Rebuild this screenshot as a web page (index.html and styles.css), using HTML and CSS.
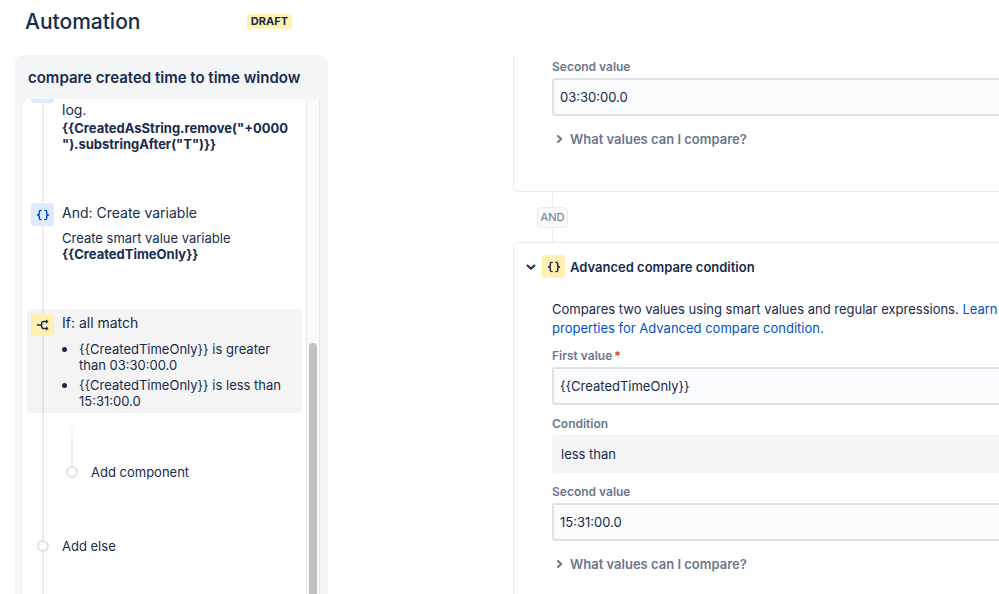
FILE: index.html
```html
<!DOCTYPE html>
<html lang="en">
<head>
  <meta charset="UTF-8">
  <title>Automation</title>
  <meta name="viewport" content="width=device-width, initial-scale=1.0">
  <link rel="stylesheet" href="styles.css">
</head>
<body>
  <header class="page-header">
    <h1>Automation</h1>
    <span class="badge">DRAFT</span>
  </header>

  <main class="page">
    <aside class="rule">
      <h2>compare created time to time window</h2>
      <div class="rule-body">
        <div class="tree">
          <div class="step step-log">
            <span class="icon icon-blue"></span>
            <div class="step-text">
              <h3>log.</h3>
              <p><b>{{CreatedAsString.remove("+0000").substringAfter("T")}}</b></p>
            </div>
          </div>

          <div class="step">
            <span class="icon icon-blue">
              <svg width="14" height="12" viewBox="0 0 15 13">
                <path d="M5.5 1.5H5Q3.5 1.5 3.5 3V4.8Q3.5 6.5 1.5 6.5Q3.5 6.5 3.5 8.2V10Q3.5 11.5 5 11.5H5.5M9.5 1.5H10Q11.5 1.5 11.5 3V4.8Q11.5 6.5 13.5 6.5Q11.5 6.5 11.5 8.2V10Q11.5 11.5 10 11.5H9.5"/>
              </svg>
            </span>
            <div class="step-text">
              <h3>And: Create variable</h3>
              <p class="details">Create smart value variable <b>{{CreatedTimeOnly}}</b></p>
            </div>
          </div>

          <div class="step selected">
            <span class="icon icon-yellow">
              <svg width="14" height="12" viewBox="0 0 15 13">
                <path d="M1.5 6.5H6M12 2.8H8.5Q6 2.8 6 5V8Q6 10.2 8.5 10.2H12"/>
                <path class="solid" d="M10.8 0.5L13.5 2.8L10.8 5.1ZM10.8 7.9L13.5 10.2L10.8 12.5Z"/>
              </svg>
            </span>
            <div class="step-text">
              <h3>If: all match</h3>
              <ul class="details">
                <li>{{CreatedTimeOnly}} is greater than 03:30:00.0</li>
                <li>{{CreatedTimeOnly}} is less than 15:31:00.0</li>
              </ul>
            </div>
          </div>

          <div class="branch">
            <span class="branch-line"></span>
            <button class="add" type="button"><span class="dot"></span>Add component</button>
          </div>
          <button class="add add-else" type="button"><span class="dot"></span>Add else</button>
        </div>
        <div class="scrollbar"><div class="thumb"></div></div>
      </div>
    </aside>

    <section class="editor">
      <div class="card card-first">
        <div class="fields">
          <label for="second1">Second value</label>
          <input type="text" id="second1" value="03:30:00.0">
          <button class="help" type="button">
            <svg width="8" height="10" viewBox="0 0 8 10"><path d="M2 2L5.2 5L2 8"/></svg>
            What values can I compare?
          </button>
        </div>
      </div>

      <div class="joiner"><span>AND</span></div>

      <div class="card">
        <div class="card-header">
          <svg width="12" height="10" viewBox="0 0 12 10"><path d="M2.5 3.5L6 6.7L9.5 3.5"/></svg>
          <span class="icon icon-yellow">
            <svg width="14" height="12" viewBox="0 0 15 13">
              <path d="M5.5 1.5H5Q3.5 1.5 3.5 3V4.8Q3.5 6.5 1.5 6.5Q3.5 6.5 3.5 8.2V10Q3.5 11.5 5 11.5H5.5M9.5 1.5H10Q11.5 1.5 11.5 3V4.8Q11.5 6.5 13.5 6.5Q11.5 6.5 11.5 8.2V10Q11.5 11.5 10 11.5H9.5"/>
            </svg>
          </span>
          <h3>Advanced compare condition</h3>
        </div>
        <div class="fields">
          <p class="intro">Compares two values using smart values and regular expressions. <a href="#">Learn more about properties for Advanced compare condition.</a></p>
          <label for="first2">First value<span class="required">*</span></label>
          <input type="text" id="first2" value="{{CreatedTimeOnly}}">
          <label for="condition">Condition</label>
          <select id="condition">
            <option>less than</option>
          </select>
          <label for="second2">Second value</label>
          <input type="text" id="second2" value="15:31:00.0">
          <button class="help" type="button">
            <svg width="8" height="10" viewBox="0 0 8 10"><path d="M2 2L5.2 5L2 8"/></svg>
            What values can I compare?
          </button>
        </div>
      </div>
    </section>
  </main>
</body>
</html>
```

FILE: styles.css
```css
* {
  box-sizing: border-box;
}

body {
  margin: 0;
  height: 100vh;
  display: flex;
  flex-direction: column;
  overflow: hidden;
  background: #fff;
  color: #172b4d;
  font-family: Inter, "Liberation Sans", sans-serif;
  font-size: 13px;
}

h1, h2, h3, p, ul {
  margin: 0;
}

button, input, select {
  font: inherit;
  color: inherit;
}

.page-header {
  display: flex;
  align-items: center;
  justify-content: space-between;
  flex: none;
  width: 292px;
  height: 55px;
  padding: 0 0 13px 25px;
}

h1 {
  font-size: 21px;
  font-weight: 500;
}

.badge {
  padding: 0 4px;
  border-radius: 3px;
  background: #fff0b3;
  font-size: 11px;
  font-weight: 700;
  line-height: 15px;
}

.page {
  display: flex;
  flex: 1;
  min-height: 0;
  gap: 185px;
  padding-left: 15px;
  overflow: hidden;
}

/* rule tree */
.rule {
  display: flex;
  flex-direction: column;
  flex: none;
  width: 313px;
  padding: 0 8px;
  border-radius: 8px 8px 0 0;
  background: #f4f5f7;
}

.rule h2 {
  padding: 13px 5px 11px;
  font-size: 15px;
  font-weight: 600;
  line-height: 20px;
}

.rule-body {
  display: flex;
  flex: 1;
  min-height: 0;
  overflow: hidden;
  border-radius: 6px 0 0 0;
  background: #fff;
}

.tree {
  display: flex;
  flex-direction: column;
  flex: 1;
  align-items: stretch;
  margin-top: -23px;
  padding: 0 4px;
  background: linear-gradient(#ebecf0, #ebecf0) no-repeat 19px 0 / 2px 100%;
}

.step {
  display: flex;
  gap: 8px;
  flex: none;
  margin-bottom: 43px;
  padding: 4px 8px 4px 4px;
  border-radius: 3px;
}

.step-log h3 {
  padding-top: 20px;
}

.selected {
  margin-bottom: 9px;
  background: rgba(9, 9, 9, 0.045);
}

.step-text {
  flex: 1;
  min-width: 0;
  line-height: 16px;
  overflow-wrap: anywhere;
}

.step h3 {
  font-size: 14px;
  font-weight: 400;
  line-height: 20px;
}

.details {
  margin-top: 7px;
}

ul.details {
  padding-left: 17px;
}

li + li {
  margin-top: 3px;
}

li::marker {
  font-size: 16px;
}

.icon {
  display: flex;
  align-items: center;
  justify-content: center;
  flex: none;
  width: 23px;
  height: 23px;
  border-radius: 3px;
}

.icon-blue {
  background: #deebff;
  color: #0052cc;
}

.icon-yellow {
  background: #fff0b3;
}

svg {
  flex: none;
  fill: none;
  stroke: currentColor;
  stroke-width: 1.6;
  stroke-linecap: round;
  stroke-linejoin: round;
}

svg .solid {
  fill: currentColor;
  stroke: none;
}

.branch {
  display: flex;
  flex-direction: column;
  align-items: flex-start;
  padding-left: 39px;
}

.branch-line {
  width: 2px;
  height: 44px;
  margin-left: 5px;
  background: linear-gradient(#fff, #ebecf0 50%);
}

.add {
  display: flex;
  align-items: center;
  gap: 13px;
  padding: 0;
  border: 0;
  background: none;
  line-height: 12px;
  cursor: pointer;
}

.dot {
  width: 12px;
  height: 12px;
  border: 2px solid #dfe1e6;
  border-radius: 50%;
  background: #fff;
}

.add-else {
  margin-top: 62px;
  padding-left: 10px;
}

.scrollbar {
  display: flex;
  flex-direction: column;
  align-items: center;
  width: 14px;
  border: solid #e8e8e8;
  border-width: 0 1px;
  background: #fafafa;
}

.thumb {
  flex: 1;
  width: 8px;
  margin-top: 244px;
  border-radius: 4px 4px 0 0;
  background: #c1c1c1;
}

/* condition editor */
.editor {
  flex: none;
  width: 636px;
}

.card {
  padding-bottom: 42px;
  border: 1px solid #ebecf0;
  border-radius: 5px;
}

.card-first {
  padding-top: 3px;
  border-top: 0;
  border-radius: 0 0 5px 5px;
}

.card-header {
  display: flex;
  align-items: center;
  gap: 5px;
  padding: 12px 11px 22px;
}

.card-header > svg,
.help svg {
  stroke-width: 2;
}

.card-header h3 {
  font-size: 13px;
  font-weight: 600;
}

.fields {
  display: flex;
  flex-direction: column;
  padding: 0 38px;
}

.intro {
  margin-bottom: 9px;
  line-height: 19px;
}

.intro a {
  color: #0052cc;
  text-decoration: none;
}

.fields label {
  margin-bottom: 2px;
  color: #6b778c;
  font-size: 12px;
  font-weight: 600;
  line-height: 18px;
}

.required {
  padding-left: 2px;
  color: #de350b;
}

.fields input,
.fields select {
  width: 100%;
  height: 38px;
  border: 2px solid #dfe1e6;
  border-radius: 3px;
  padding: 0 6px;
  background: #fafbfc;
}

.fields select {
  appearance: none;
  padding: 0 7px;
  border-color: #f4f5f7;
  background: #f4f5f7;
}

.fields input + label,
.fields select + label {
  margin-top: 10px;
}

.help {
  display: flex;
  align-items: center;
  gap: 6px;
  margin-top: 13px;
  padding: 0 4px;
  border: 0;
  background: none;
  color: #6b778c;
  font-weight: 600;
  line-height: 20px;
  cursor: pointer;
}

.joiner {
  display: flex;
  width: 31px;
  height: 50px;
  margin-left: 24px;
  align-items: center;
  background: linear-gradient(#ebecf0, #ebecf0) no-repeat center / 1px 100%;
}

.joiner span {
  width: 31px;
  border: 1px solid #ebecf0;
  border-radius: 4px;
  background: #fafbfc;
  color: #6b778c;
  font-size: 11px;
  line-height: 19px;
  text-align: center;
}
```
